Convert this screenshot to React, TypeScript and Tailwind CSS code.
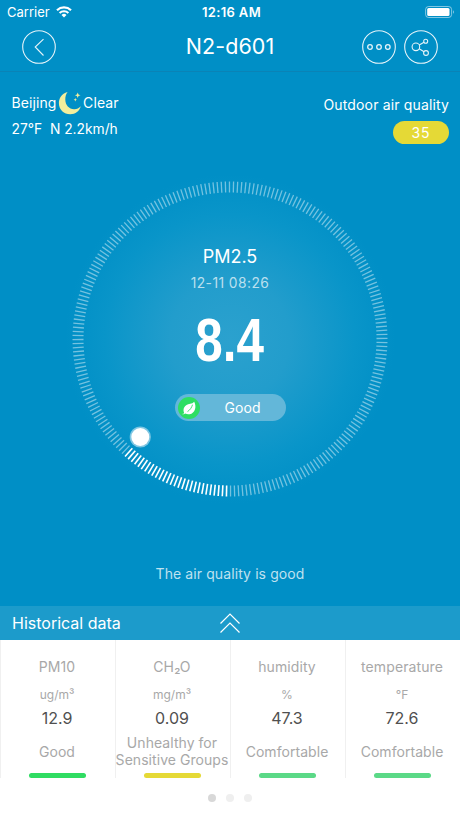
import { ReactNode } from 'react';

const metrics = [
  {
    title: 'PM10',
    unit: 'ug/m³',
    value: '12.9',
    status: 'Good',
    bar: 'bg-[#2fdc62]',
  },
  {
    title: 'CH₂O',
    unit: 'mg/m³',
    value: '0.09',
    status: 'Unhealthy for Sensitive Groups',
    bar: 'bg-[#e5d936]',
  },
  {
    title: 'humidity',
    unit: '%',
    value: '47.3',
    status: 'Comfortable',
    bar: 'bg-[#5bd987]',
  },
  {
    title: 'temperature',
    unit: '°F',
    value: '72.6',
    status: 'Comfortable',
    bar: 'bg-[#5bd987]',
  },
];

const TICK_COUNT = 240;
const ACTIVE_TICKS = 28;

const StatusBar = () => (
  <div className="grid h-6 grid-cols-3 items-center pl-[7px] pr-[5px] text-[13px] leading-6">
    <div className="flex items-center gap-[6px]">
      <span>Carrier</span>
      <svg className="h-3 w-4" viewBox="0 0 16 12" fill="none">
        <path d="M1 4.2a10.2 10.2 0 0 1 14 0" stroke="white" strokeWidth="2.2" />
        <path
          d="M3.6 7a6.4 6.4 0 0 1 8.8 0"
          stroke="white"
          strokeWidth="2.1"
        />
        <path d="M5.5 8.9a3.7 3.7 0 0 1 5 0L8 11.5z" fill="white" />
      </svg>
    </div>
    <span className="pl-px text-center font-semibold tracking-[0.35px]">
      12:16 AM
    </span>
    <svg
      className="h-[13px] w-[30px] justify-self-end"
      viewBox="0 0 30 13"
      fill="none"
    >
      <rect
        x="0.6"
        y="0.5"
        width="26"
        height="11"
        rx="3"
        stroke="white"
        strokeOpacity="0.5"
      />
      <rect x="2.2" y="2" width="22.3" height="8" rx="1.5" fill="white" />
      <path d="M28 4.3c1.3.5 1.3 3 0 3.5z" fill="white" fillOpacity="0.5" />
    </svg>
  </div>
);

const RoundButton = ({
  label,
  children,
}: {
  label: string;
  children: ReactNode;
}) => (
  <button aria-label={label} className="h-[34px] w-[34px]">
    <svg
      viewBox="0 0 34 34"
      fill="none"
      stroke="white"
      strokeWidth="1.1"
      className="h-full w-full opacity-90"
    >
      <circle cx="17" cy="17" r="16.3" />
      {children}
    </svg>
  </button>
);

const Header = () => (
  <div className="flex h-12 items-start justify-between border-b border-[#0a83b6] px-[22px] pt-1.5">
    <div className="flex w-[76px]">
      <RoundButton label="Back">
        <path d="M21.5 9.2 13.2 17l8.3 8.5" />
      </RoundButton>
    </div>
    <h1 className="text-[21.5px] leading-8 tracking-[0.1px]">N2-d601</h1>
    <div className="flex w-[76px] gap-2">
      <RoundButton label="More">
        <g strokeWidth="1.3">
          <circle cx="8" cy="17" r="2.3" />
          <circle cx="17" cy="17" r="2.3" />
          <circle cx="25.8" cy="17" r="2.3" />
        </g>
      </RoundButton>
      <RoundButton label="Share">
        <circle cx="11.9" cy="16.8" r="3.8" />
        <circle cx="21.7" cy="11.2" r="2" />
        <circle cx="22" cy="23" r="2.4" />
        <path d="m15.2 15 4.8-2.8M15.2 18.7l4.8 3" />
      </RoundButton>
    </div>
  </div>
);

const MoonIcon = () => (
  <svg viewBox="0 0 24 24" className="h-6 w-6">
    <path
      d="M9.6 1C3.4 2.4.9 7.6.9 12.2.9 18.7 6 23.2 12.2 23.2c5.4 0 9.2-3.2 10.6-8-2 2.3-4.4 3.2-6.8 3-4.9-.4-8.7-4-8.7-9.8 0-3 .8-5.6 2.3-7.4z"
      fill="#f3ee9c"
    />
    <path
      d="m19.7 1.5.8 2 2 .8-2 .8-.8 2-.8-2-2-.8 2-.8zM17.3 7l.5 1.2 1.2.5-1.2.5-.5 1.2-.5-1.2-1.2-.5 1.2-.5z"
      fill="#f3ee9c"
    />
  </svg>
);

const Weather = () => (
  <div className="flex justify-between pl-[11.5px] pr-[11px] pt-[18px] text-[14px]">
    <div>
      <div className="flex h-[25px] items-center">
        <span className="tracking-[0.1px]">Beijing</span>
        <span className="ml-px">
          <MoonIcon />
        </span>
        <span className="ml-[1.5px] tracking-[0.1px]">Clear</span>
      </div>
      <p className="whitespace-pre pt-px text-[13.8px] leading-[26px]">
        27°F  N 2.2km/h
      </p>
    </div>
    <div className="flex flex-col items-end pt-[3px]">
      <p className="leading-6 tracking-[0.15px]">Outdoor air quality</p>
      <span className="mt-[4px] h-[23px] w-14 rounded-full bg-[#e5d936] text-center tracking-[0.8px] leading-[23px]">
        35
      </span>
    </div>
  </div>
);

const Dial = () => (
  <svg viewBox="0 0 320 320" className="col-start-1 row-start-1 h-80 w-80">
    {Array.from({ length: TICK_COUNT }, (_, i) => (
      <line
        key={i}
        x1="160"
        x2="160"
        y1="306.5"
        y2="317.5"
        stroke="white"
        strokeWidth={i > 0 && i <= ACTIVE_TICKS ? 1.6 : 1.3}
        strokeOpacity={i > 0 && i <= ACTIVE_TICKS ? 1 : 0.45}
        transform={`rotate(${(i * 360) / TICK_COUNT - 0.2} 160 160)`}
      />
    ))}
    <circle cx="70.3" cy="258" r="10.6" fill="#7fc6e2" />
    <circle cx="70.3" cy="258" r="9" fill="white" />
  </svg>
);

const Gauge = () => (
  <div className="mt-[35px] grid h-80 place-items-center">
    <Dial />
    <div className="col-start-1 row-start-1 flex h-80 flex-col items-center pt-16">
      <p className="text-[18px] leading-7">PM2.5</p>
      <p className="text-[13.8px] leading-6 tracking-[0.45px] text-white/70">
        12-11 08:26
      </p>
      <p className="mt-[15px] scale-x-[0.81] pr-0.5 font-['Liberation_Sans',sans-serif] text-[61px] leading-[60px] font-bold">
        8.4
      </p>
      <div className="mt-6 flex h-[27px] w-[111px] items-center rounded-full bg-[#63b7d9] pl-[3px]">
        <svg viewBox="0 0 22 22" className="h-[22px] w-[22px]">
          <circle cx="11" cy="11" r="11" fill="#2ede63" />
          <path
            d="M4 17c1 0 1.6-.2 2.2-.8-1.8-4.5.2-8.4 6-9.4 1.6-.3 3-.9 4-2.1 2.7 5 .8 11.6-4.5 12.5-1.7.3-3.2 0-4.4-.6-.9.8-2 1-3.3.4z"
            fill="white"
          />
          <path
            d="M9.5 14.6c2.6-1.8 4.2-4 5-6.9"
            stroke="#2ede63"
            strokeWidth="0.9"
            fill="none"
          />
        </svg>
        <span className="flex-1 text-center text-[14px] tracking-[0.1px]">
          Good
        </span>
      </div>
    </div>
  </div>
);

const MetricCard = ({ metric }: { metric: (typeof metrics)[number] }) => (
  <div className="h-[138px] border-l border-[#f0f0f0]">
    <div className="-ml-0.5 flex flex-col items-center pt-[17px] text-[14px] text-[#a8a8a8]">
      <p className="leading-5 tracking-[0.1px]">{metric.title}</p>
      <p className="mt-[9px] text-[12px] leading-[18px]">{metric.unit}</p>
      <p className="mt-[4px] text-[16px] leading-5 text-[#505050]">
        {metric.value}
      </p>
      <div className="mt-[5px] flex h-9 w-[118px] items-center justify-center text-center leading-[17px] tracking-[0.05px]">
        {metric.status}
      </div>
      <div className={`mt-[4px] h-[5px] w-[57px] rounded-full ${metric.bar}`} />
    </div>
  </div>
);

export default function App() {
  return (
    <div className="flex h-[818px] w-[460px] flex-col overflow-hidden bg-white font-['Inter','Liberation_Sans',sans-serif] text-white">
      <div className="h-[606px] bg-[#008fc6] bg-[radial-gradient(circle_at_230px_339px,#2ba1ce_0px,#229dcc_60px,#0995c9_125px,#008fc6_165px)]">
        <StatusBar />
        <Header />
        <Weather />
        <Gauge />
        <p className="mt-[63px] text-center text-[14px] leading-6 tracking-[0.1px] text-white/75">
          The air quality is good
        </p>
      </div>

      <div className="grid h-[34px] grid-cols-3 items-center bg-[#1c9bcb] px-3">
        <span className="whitespace-nowrap text-[16px]">Historical data</span>
        <svg
          viewBox="0 0 22 22"
          className="h-[22px] w-[22px] justify-self-center"
          fill="none"
          stroke="white"
          strokeWidth="1.2"
        >
          <path d="m1.5 11.5 9.5-9.5 9.5 9.5M1.5 20.5 11 11l9.5 9.5" />
        </svg>
      </div>

      <div className="grid grid-cols-4">
        {metrics.map((metric) => (
          <MetricCard key={metric.title} metric={metric} />
        ))}
      </div>

      <div className="flex flex-1 justify-center gap-[10px] pt-4">
        <span className="h-2 w-2 rounded-full bg-[#d8d8d8]" />
        <span className="h-2 w-2 rounded-full bg-[#efefef]" />
        <span className="h-2 w-2 rounded-full bg-[#efefef]" />
      </div>
    </div>
  );
}
